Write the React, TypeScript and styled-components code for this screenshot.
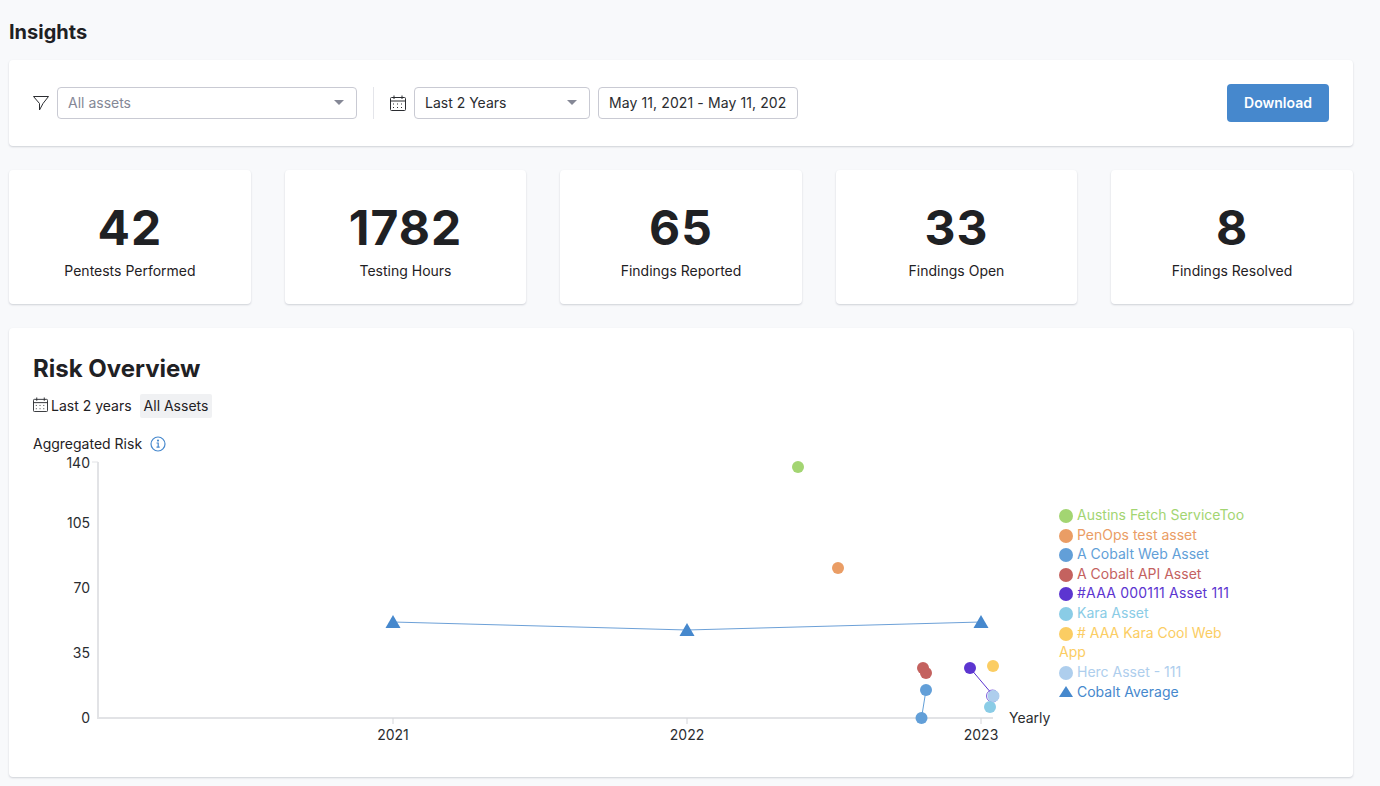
import React from 'react';
import styled, { createGlobalStyle } from 'styled-components';

const GlobalStyle = createGlobalStyle`
  html, body {
    margin: 0;
    background: #f8f9fb;
    font-family: Inter, "Liberation Sans", sans-serif;
    color: #1f2124;
  }
`;

const Page = styled.div`
  box-sizing: border-box;
  width: 1380px;
  height: 786px;
  padding: 20px 27px 0 9px;
  overflow: hidden;
`;

const Heading = styled.h1`
  margin: 0 0 15px;
  font-size: 20px;
  line-height: 25px;
  font-weight: 700;
`;

const Card = styled.div`
  background: #fff;
  border-radius: 4px;
  box-shadow: 0 1px 2px rgba(40, 50, 70, 0.2);
`;

const Toolbar = styled(Card)`
  display: flex;
  align-items: center;
  height: 86px;
  padding: 0 24px;
  box-sizing: border-box;
`;

const IconSlot = styled.span`
  display: flex;
  width: 16px;
  height: 16px;
  margin-right: 8px;
`;

const Select = styled.div<{ $width: number; $muted?: boolean }>`
  box-sizing: border-box;
  display: flex;
  align-items: center;
  justify-content: space-between;
  width: ${(p) => p.$width}px;
  height: 32px;
  padding: 0 12px 1px 10px;
  border: 1px solid #c9cad3;
  border-radius: 4px;
  font-size: 14px;
  color: ${(p) => (p.$muted ? '#858896' : '#2a2c30')};
`;

const Caret = styled.span`
  width: 0;
  height: 0;
  border-left: 5px solid transparent;
  border-right: 5px solid transparent;
  border-top: 5px solid #858896;
`;

const Divider = styled.span`
  width: 1px;
  height: 32px;
  margin: 0 16px;
  background: #e4e5ea;
`;

const DateInput = styled.div`
  box-sizing: border-box;
  width: 200px;
  height: 32px;
  margin-left: 8px;
  padding: 0 10px;
  line-height: 30px;
  border: 1px solid #c9cad3;
  border-radius: 4px;
  font-size: 14px;
  color: #2a2c30;
`;

const DateText = styled.div`
  white-space: nowrap;
  overflow: hidden;
  letter-spacing: 0.1px;
`;

const DownloadButton = styled.button`
  width: 102px;
  height: 38px;
  margin-left: auto;
  padding: 0 0 2px;
  border: 0;
  border-radius: 4px;
  background: #4688cd;
  color: #fff;
  font-family: inherit;
  font-size: 14px;
  font-weight: 600;
`;

const StatsRow = styled.div`
  display: grid;
  grid-template-columns: repeat(5, 1fr);
  gap: 33.6px;
  margin: 24px 0;
`;

const StatCard = styled(Card)`
  display: flex;
  flex-direction: column;
  align-items: center;
  height: 134px;
  padding-top: 31px;
  box-sizing: border-box;
`;

const StatValue = styled.div`
  font-size: 48px;
  line-height: 54px;
  font-weight: 700;
  letter-spacing: 1px;
`;

const StatLabel = styled.div`
  margin-top: 6px;
  font-size: 14px;
  line-height: 20px;
`;

const RiskCard = styled(Card)`
  height: 449px;
  padding: 24px 24px 0;
  box-sizing: border-box;
`;

const RiskTitle = styled.h2`
  margin: 0;
  font-size: 24px;
  line-height: 34px;
  font-weight: 700;
`;

const MetaRow = styled.div`
  display: flex;
  align-items: center;
  height: 24px;
  margin-top: 8px;
  font-size: 14px;
  line-height: 24px;
`;

const MetaIcon = styled.span`
  display: flex;
  width: 15px;
  height: 15px;
  margin-right: 3px;
  margin-top: -3px;
`;

const Tag = styled.span`
  margin-left: 8px;
  padding: 0 4px;
  background: #f0f1f3;
  border-radius: 2px;
`;

const AxisTitle = styled.div`
  box-sizing: border-box;
  display: flex;
  align-items: center;
  gap: 8px;
  height: 20px;
  margin-top: 16px;
  padding-bottom: 1px;
  font-size: 14px;
`;

const ChartRow = styled.div`
  display: flex;
  margin-top: -2px;
`;

const ChartSvg = styled.svg`
  flex: none;
  display: block;
  font-family: Inter, "Liberation Sans", sans-serif;
  font-size: 14px;
`;

const Legend = styled.ul`
  list-style: none;
  width: 190px;
  margin: 53px 0 0;
  padding: 0;
  font-size: 14px;
  line-height: 19.6px;
`;

const LegendItem = styled.li<{ $color: string; $wide?: boolean }>`
  color: ${(p) => p.$color};
  letter-spacing: ${(p) => (p.$wide ? '0.2px' : '0')};
`;

const AverageItem = styled(LegendItem)`
  margin-top: 1px;
`;

const Dot = styled.span<{ $color: string }>`
  display: inline-block;
  width: 14px;
  height: 14px;
  margin-right: 4px;
  border-radius: 50%;
  vertical-align: -3px;
  background: ${(p) => p.$color};
`;

const Triangle = styled.span<{ $color: string }>`
  display: inline-block;
  width: 0;
  height: 0;
  margin-right: 4px;
  border-left: 7px solid transparent;
  border-right: 7px solid transparent;
  border-bottom: 11px solid ${(p) => p.$color};
`;

const stats = [
  { value: '42', label: 'Pentests Performed' },
  { value: '1782', label: 'Testing Hours' },
  { value: '65', label: 'Findings Reported' },
  { value: '33', label: 'Findings Open' },
  { value: '8', label: 'Findings Resolved' },
];

const legend = [
  { name: 'Austins Fetch ServiceToo', color: '#a3d572' },
  { name: 'PenOps test asset', color: '#ea9d65' },
  { name: 'A Cobalt Web Asset', color: '#629fd8' },
  { name: 'A Cobalt API Asset', color: '#c4625f' },
  { name: '#AAA 000111 Asset 111', color: '#5c35d0', wide: true },
  { name: 'Kara Asset', color: '#8accE6' },
  { name: '# AAA Kara Cool Web App', color: '#fbcd63' },
  { name: 'Herc Asset - 111', color: '#aeceed' },
];

// page coords minus chart origin (33, 452)
const OX = 33;
const OY = 452;

const dots = [
  { x: 798, y: 467, color: '#a3d572' },
  { x: 838, y: 568, color: '#ea9d65' },
  { x: 923, y: 668, color: '#c4625f' },
  { x: 926, y: 673, color: '#c4625f' },
  { x: 926, y: 690, color: '#629fd8' },
  { x: 921.5, y: 718, color: '#629fd8' },
  { x: 970, y: 668, color: '#5c35d0' },
  { x: 993, y: 666, color: '#fbcd63' },
  { x: 990, y: 707, color: '#8accE6' },
  { x: 993.5, y: 696, color: '#aeceed' },
];

const FilterIcon = () => (
  <svg width="16" height="16" viewBox="0 0 16 16" fill="none" stroke="#2a2c30" strokeWidth="1">
    <path d="M0.5 1.5h15L10 8.5 6.5 15V8.5z" strokeLinejoin="round" />
  </svg>
);

const CalendarIcon = ({ size = 16 }: { size?: number }) => (
  <svg width={size} height={size} viewBox="0 0 16 16" fill="none" stroke="#2a2c30" strokeWidth="1">
    <rect x="0.5" y="2.5" width="15" height="13" rx="1" />
    <path d="M0.5 6h15M4 0.5v3.5M12 0.5v3.5" />
    <path d="M3 9h2M7 9h2M11 9h2M3 12.5h2M7 12.5h2M11 12.5h2" strokeDasharray="1 1" />
  </svg>
);

const InfoIcon = () => (
  <svg width="16" height="16" viewBox="0 0 16 16" fill="none" stroke="#4688cd" strokeWidth="1.2">
    <circle cx="8" cy="8" r="7" />
    <path d="M6.5 7h1.7v4M6.5 11.2h3.2" />
    <circle cx="8" cy="4.6" r="0.5" fill="#4688cd" />
  </svg>
);

const Chart = () => (
  <ChartSvg width={1026} height={306} viewBox="0 0 1026 306">
    <path d={`M${98 - OX} ${462 - OY}V${718 - OY}H${993 - OX}`} fill="none" stroke="#e2e3e6" strokeWidth="2" />
    <path d={`M${92 - OX} ${462 - OY}H${98 - OX}`} stroke="#e2e3e6" />
    {[393, 687, 981].map((x) => (
      <path key={x} d={`M${x - OX} ${718 - OY}v6`} stroke="#d5d6da" />
    ))}
    {[
      { label: '140', y: 468 },
      { label: '105', y: 528 },
      { label: '70', y: 593 },
      { label: '35', y: 658 },
      { label: '0', y: 723 },
    ].map((t) => (
      <text key={t.label} x={90 - OX} y={t.y - OY} textAnchor="end" fill="#2a2c30">
        {t.label}
      </text>
    ))}
    {[
      { label: '2021', x: 393 },
      { label: '2022', x: 687 },
      { label: '2023', x: 981 },
    ].map((t) => (
      <text key={t.label} x={t.x - OX} y={740 - OY} textAnchor="middle" fill="#2a2c30">
        {t.label}
      </text>
    ))}
    <text x={1009 - OX} y={723 - OY} fill="#2a2c30">
      Yearly
    </text>
    <polyline
      points={`${393 - OX},${622 - OY} ${687 - OX},${630 - OY} ${981 - OX},${622 - OY}`}
      fill="none"
      stroke="#4688cd"
      strokeWidth="0.8"
    />
    {[
      { x: 393, y: 622 },
      { x: 687, y: 630 },
      { x: 981, y: 622 },
    ].map((t) => (
      <path key={t.x} d={`M${t.x - OX} ${t.y - 7 - OY}l7.5 13h-15z`} fill="#4688cd" />
    ))}
    <path d={`M${926 - OX} ${690 - OY}L${921.5 - OX} ${718 - OY}`} stroke="#629fd8" />
    <path d={`M${970 - OX} ${668 - OY}L${992 - OX} ${694 - OY}`} stroke="#5c35d0" />
    <circle cx={992.5 - OX} cy={696 - OY} r="6" fill="none" stroke="#5c35d0" strokeWidth="0.8" />
    {dots.map((d) => (
      <circle key={`${d.x}-${d.y}`} cx={d.x - OX} cy={d.y - OY} r="6" fill={d.color} />
    ))}
  </ChartSvg>
);

const App: React.FC = () => {
  return (
    <Page>
      <GlobalStyle />
      <Heading>Insights</Heading>
      <Toolbar>
        <IconSlot>
          <FilterIcon />
        </IconSlot>
        <Select $width={300} $muted>
          All assets
          <Caret />
        </Select>
        <Divider />
        <IconSlot>
          <CalendarIcon />
        </IconSlot>
        <Select $width={176}>
          Last 2 Years
          <Caret />
        </Select>
        <DateInput>
          <DateText>May 11, 2021 - May 11, 2023</DateText>
        </DateInput>
        <DownloadButton>Download</DownloadButton>
      </Toolbar>
      <StatsRow>
        {stats.map((s) => (
          <StatCard key={s.label}>
            <StatValue>{s.value}</StatValue>
            <StatLabel>{s.label}</StatLabel>
          </StatCard>
        ))}
      </StatsRow>
      <RiskCard>
        <RiskTitle>Risk Overview</RiskTitle>
        <MetaRow>
          <MetaIcon>
            <CalendarIcon size={15} />
          </MetaIcon>
          Last 2 years
          <Tag>All Assets</Tag>
        </MetaRow>
        <AxisTitle>
          Aggregated Risk
          <InfoIcon />
        </AxisTitle>
        <ChartRow>
          <Chart />
          <Legend>
            {legend.map((l) => (
              <LegendItem key={l.name} $color={l.color} $wide={l.wide}>
                <Dot $color={l.color} />
                {l.name}
              </LegendItem>
            ))}
            <AverageItem $color="#4688cd">
              <Triangle $color="#4688cd" />
              Cobalt Average
            </AverageItem>
          </Legend>
        </ChartRow>
      </RiskCard>
    </Page>
  );
};

export default App;
